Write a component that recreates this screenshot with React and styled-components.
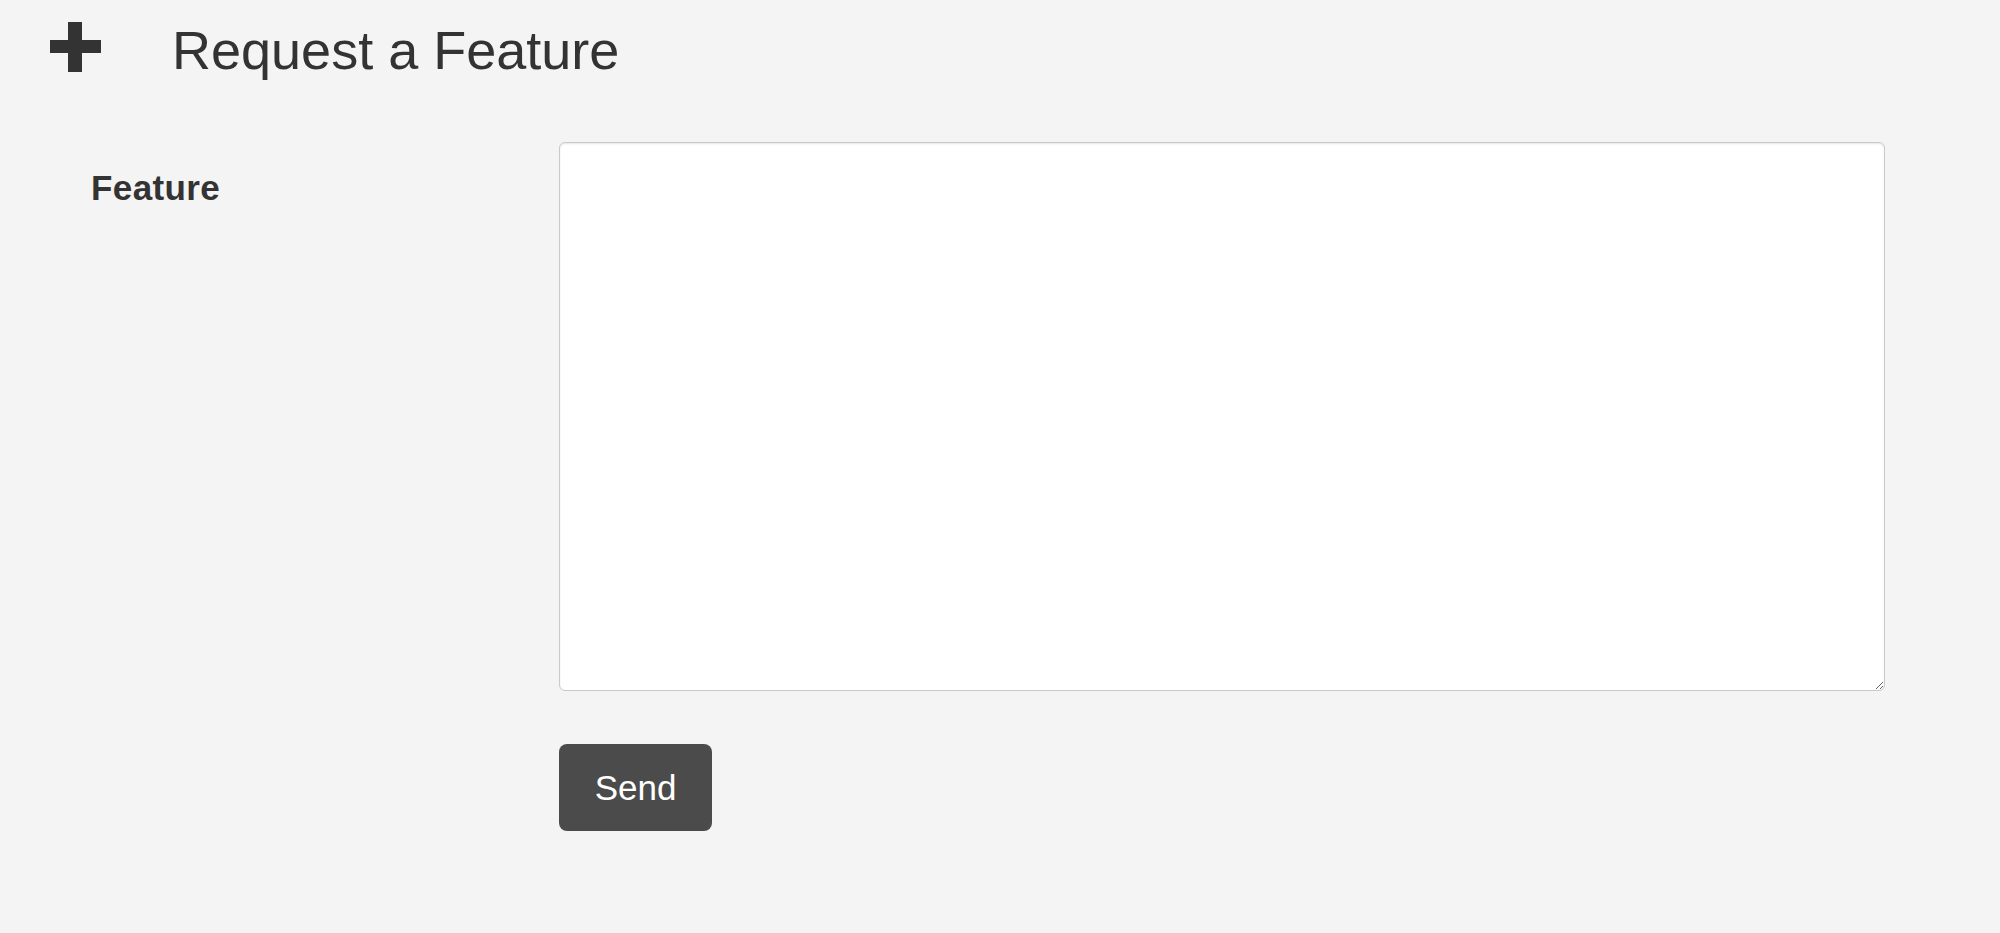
import React from "react";
import styled, { createGlobalStyle } from "styled-components";

const GlobalStyle = createGlobalStyle`
  body {
    margin: 0;
    background: #f4f4f4;
    font-family: "Liberation Sans", Arial, sans-serif;
    color: #333;
  }
`;

const Page = styled.div`
  min-height: 933px;
  padding-top: 22px;
  box-sizing: border-box;
`;

const Header = styled.div`
  display: flex;
  align-items: flex-start;
  padding-left: 50px;
`;

const PlusIcon = styled.svg`
  width: 51px;
  height: 50px;
  flex-shrink: 0;
`;

const Title = styled.h1`
  margin: 1px 0 0 71px;
  font-size: 54px;
  font-weight: 400;
  line-height: 1;
  color: #333;
`;

const Form = styled.form`
  display: grid;
  grid-template-columns: 468px 1326px;
  row-gap: 53px;
  margin-top: 65px;
  padding-left: 91px;
`;

const Label = styled.label`
  padding-top: 21px;
  font-size: 35px;
  font-weight: 700;
  line-height: 50px;
  letter-spacing: 0.4px;
  color: #333;
`;

const TextArea = styled.textarea`
  display: block;
  width: 1326px;
  height: 549px;
  box-sizing: border-box;
  border: 1px solid #c9c9c9;
  border-radius: 6px;
  background: #fff;
  box-shadow: inset 0 1px 2px rgba(0, 0, 0, 0.1);
  font-family: inherit;
  font-size: 28px;
  padding: 10px 14px;
  resize: vertical;
  &:focus {
    outline: none;
  }
`;

const SendButton = styled.button`
  grid-column: 2;
  justify-self: start;
  width: 153px;
  height: 87px;
  border: none;
  border-radius: 8px;
  background: #4a4b4a;
  color: #fff;
  font-family: inherit;
  font-size: 35px;
  cursor: pointer;
`;

const App = () => {
  const handleSubmit = (e) => {
    e.preventDefault();
  };

  return (
    <>
      <GlobalStyle />
      <Page>
        <Header>
          <PlusIcon viewBox="0 0 51 50">
            <rect x="18" y="0" width="14" height="50" fill="#333" />
            <rect x="0" y="18" width="51" height="13" fill="#333" />
          </PlusIcon>
          <Title>Request a Feature</Title>
        </Header>
        <Form onSubmit={handleSubmit}>
          <Label htmlFor="feature">Feature</Label>
          <TextArea id="feature" name="feature" />
          <SendButton type="submit">Send</SendButton>
        </Form>
      </Page>
    </>
  );
};

export default App;
